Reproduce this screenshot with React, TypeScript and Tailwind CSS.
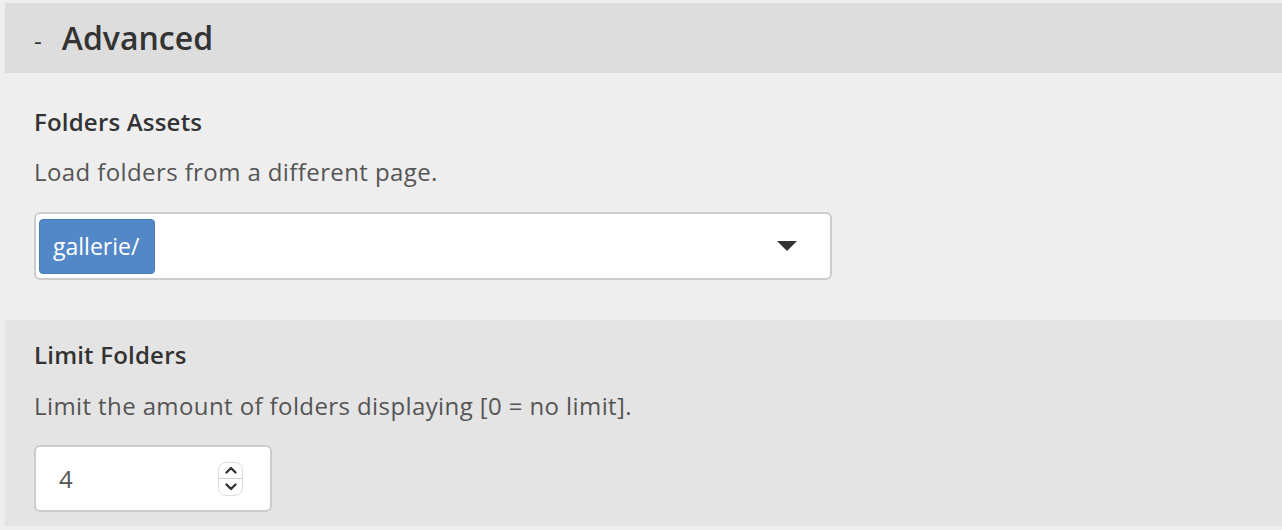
export default function App() {
  return (
    <div className="min-h-[530px] bg-[#eeeeee] pt-[3px] pl-[5px] font-['Open_Sans','Liberation_Sans',sans-serif]">
      <div className="flex h-[70px] items-center bg-[#dddddd] pl-[29px] text-[#333333]">
        <span className="pt-[6px] text-[24px] leading-none">-</span>
        <span className="ml-[20px] text-[32px] font-semibold leading-none">Advanced</span>
      </div>

      <section className="bg-[#eeeeee] pl-[29px] pt-[34px] pb-[40px]">
        <h3 className="text-[24px] font-semibold leading-[30px] tracking-[0.2px] text-[#333333]">Folders Assets</h3>
        <p className="mt-[20px] text-[24px] leading-[30px] tracking-[0.4px] text-[#555555]">
          Load folders from a different page.
        </p>
        <div className="mt-[25px] flex h-[68px] w-[798px] items-center rounded-[6px] border-2 border-[#cccccc] bg-white pl-[3px] pr-[33px]">
          <span className="flex h-[55px] items-center rounded-[4px] border border-[#4a7cb8] bg-[#5288c7] pl-[13px] pr-[15px] text-[23px] text-white">
            gallerie/
          </span>
          <span className="ml-auto h-0 w-0 border-x-[10px] border-t-[10px] border-x-transparent border-t-[#333333]" />
        </div>
      </section>

      <section className="bg-[#e4e4e4] pl-[29px] pt-[20px] pb-[14px]">
        <h3 className="text-[24px] font-semibold leading-[30px] tracking-[0.2px] text-[#333333]">Limit Folders</h3>
        <p className="mt-[21px] text-[24px] leading-[30px] tracking-[0.4px] text-[#555555]">
          Limit the amount of folders displaying [0 = no limit].
        </p>
        <div className="mt-[24px] flex h-[67px] w-[238px] items-center rounded-[6px] border-2 border-[#cccccc] bg-white pl-[23px] pr-[27px]">
          <span className="text-[24px] text-[#555555]">4</span>
          <span className="ml-auto flex h-[34px] w-[25px] flex-col overflow-hidden rounded-[8px] border border-[#dddddd] bg-white">
            <span className="flex flex-1 items-center justify-center border-b border-[#d0d0d0]">
              <svg width="12" height="8" viewBox="0 0 12 8">
                <path d="M1.5 6.5 L6 2 L10.5 6.5" fill="none" stroke="#333" strokeWidth="2.4" strokeLinecap="round" strokeLinejoin="round" />
              </svg>
            </span>
            <span className="flex flex-1 items-center justify-center">
              <svg width="12" height="8" viewBox="0 0 12 8">
                <path d="M1.5 1.5 L6 6 L10.5 1.5" fill="none" stroke="#333" strokeWidth="2.4" strokeLinecap="round" strokeLinejoin="round" />
              </svg>
            </span>
          </span>
        </div>
      </section>
    </div>
  );
}
